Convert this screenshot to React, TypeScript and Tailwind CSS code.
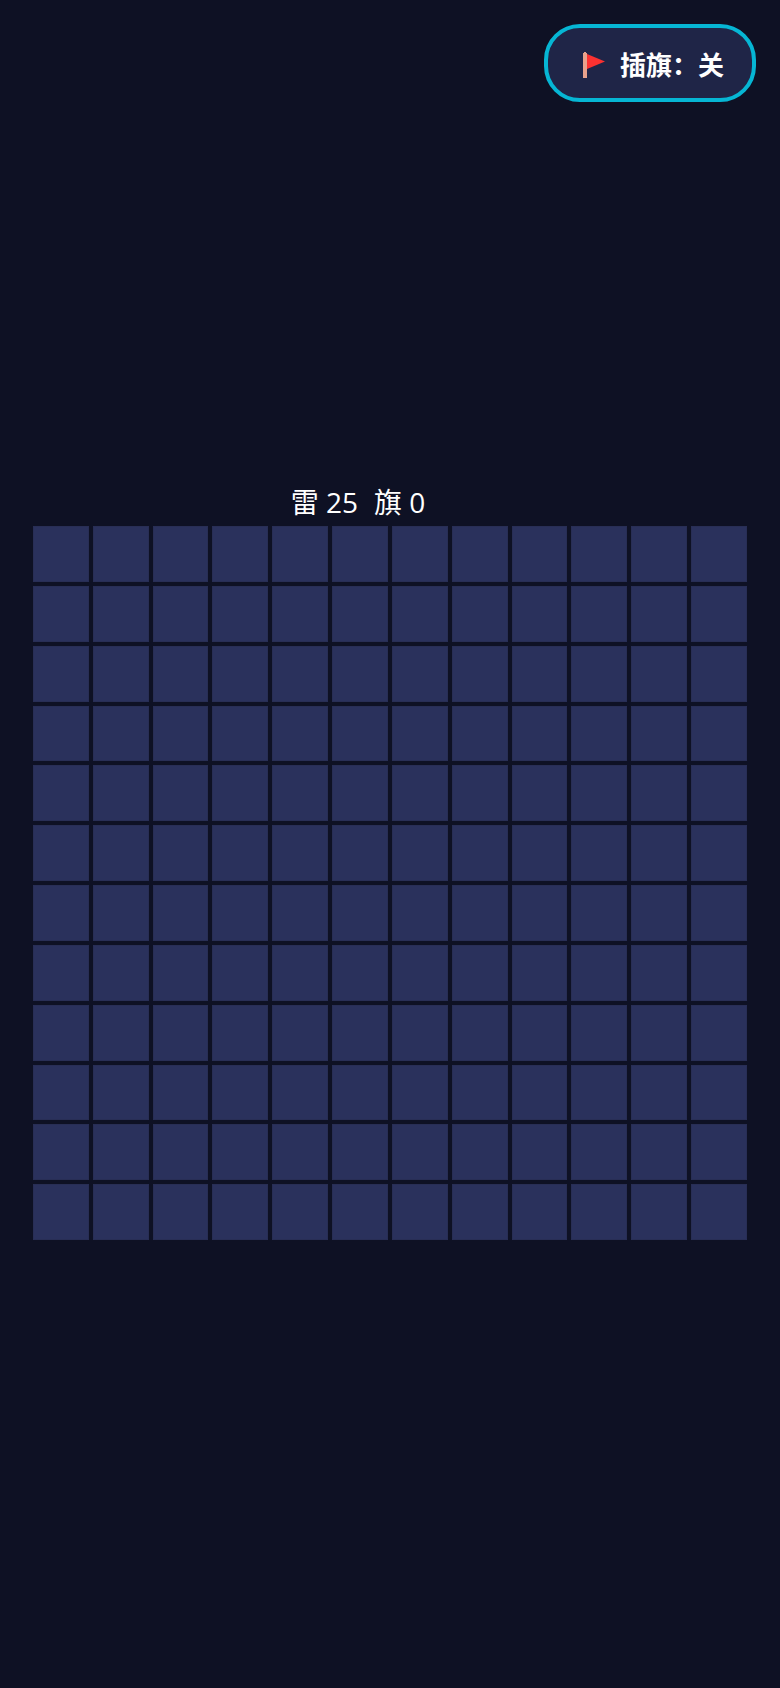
import React, { useState } from 'react'

const SIZE = 12
const MINES = 25

function FlagIcon() {
  return (
    <svg viewBox="0 0 36 28" className="h-7 w-9" aria-hidden="true">
      <path d="M7 3 L8 3 L8 2 H10 L10 3 L11 3 V28 H7 Z" fill="#e8a28c" />
      <path d="M11 4 L29 11.5 L11 19 Z" fill="#fb3131" />
    </svg>
  )
}

type FlagToggleProps = {
  active: boolean
  onToggle: () => void
}

function FlagToggle({ active, onToggle }: FlagToggleProps) {
  return (
    <button
      type="button"
      aria-pressed={active}
      onClick={onToggle}
      className="flex items-center gap-2 rounded-[36px] border-4 border-[#06b6d4] bg-[#1f2547] px-7 pt-[17px] pb-[15px] text-[26px] leading-[38px] font-bold text-white"
    >
      <FlagIcon />
      <span>插旗：{active ? '开' : '关'}</span>
    </button>
  )
}

export default function App() {
  const [flagMode, setFlagMode] = useState(false)
  const [flags, setFlags] = useState<number[]>([])

  function handleCell(index: number) {
    if (!flagMode) return
    setFlags((prev) =>
      prev.includes(index) ? prev.filter((i) => i !== index) : [...prev, index],
    )
  }

  return (
    <div className="flex min-h-screen flex-col bg-[#0e1124] font-['Noto_Sans_CJK_SC',sans-serif] text-white">
      <header className="flex justify-end p-6">
        <FlagToggle active={flagMode} onToggle={() => setFlagMode(!flagMode)} />
      </header>

      <main className="px-[33px] pt-[356px] pb-6">
        <p className="flex justify-center gap-4 pr-16 pb-1 font-['Open_Sans','Noto_Sans_CJK_SC',sans-serif] text-[28px] leading-10">
          <span>雷 {MINES}</span>
          <span>旗 {flags.length}</span>
        </p>
        <div className="grid grid-cols-12 gap-1">
          {Array.from({ length: SIZE * SIZE }, (_, index) => (
            <button
              key={index}
              type="button"
              aria-label={`${Math.floor(index / SIZE) + 1}-${(index % SIZE) + 1}`}
              onClick={() => handleCell(index)}
              className="flex aspect-square items-center justify-center border border-[#282e55] bg-[#2a315c]"
            >
              {flags.includes(index) && <FlagIcon />}
            </button>
          ))}
        </div>
      </main>
    </div>
  )
}
